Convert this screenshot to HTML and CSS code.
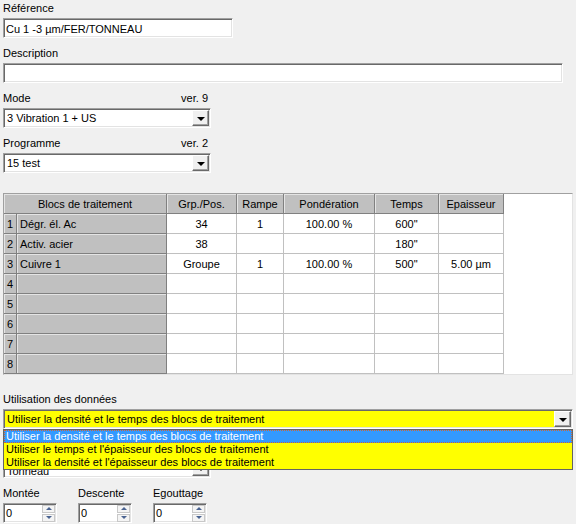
FILE: index.html
```html
<!DOCTYPE html>
<html lang="fr">
<head>
  <meta charset="UTF-8">
  <title>Programme de traitement</title>
  <link rel="stylesheet" href="styles.css">
</head>
<body>

  <div class="form">

    <!-- Référence -->
    <div class="field">
      <div class="label">Référence</div>
      <div class="box w-ref">Cu 1 -3 µm/FER/TONNEAU</div>
    </div>

    <div class="field">
      <div class="label">Description</div>
      <div class="box w-desc"></div>
    </div>

    <div class="field">
      <div class="label label-row"><span>Mode</span><span>ver. 9</span></div>
      <div class="box combo w-combo">
        <span>3 Vibration 1 + US</span>
        <div class="arrow-btn"><span class="tri"></span></div>
      </div>
    </div>

    <div class="field">
      <div class="label label-row"><span>Programme</span><span>ver. 2</span></div>
      <div class="box combo w-combo">
        <span>15 test</span>
        <div class="arrow-btn"><span class="tri"></span></div>
      </div>
    </div>

    <!-- Blocs de traitement -->
    <div class="grid-wrap">
      <table class="grid">
        <colgroup>
          <col style="width:13px"><col style="width:150px"><col style="width:70px"><col style="width:47px">
          <col style="width:91px"><col style="width:64px"><col style="width:65px">
        </colgroup>
        <tr>
          <th colspan="2">Blocs de traitement</th>
          <th>Grp./Pos.</th>
          <th>Rampe</th>
          <th>Pondération</th>
          <th>Temps</th>
          <th>Epaisseur</th>
        </tr>
        <tr>
          <td class="num">1</td><td class="name">Dégr. él. Ac</td>
          <td>34</td><td>1</td><td>100.00 %</td><td>600"</td><td></td>
        </tr>
        <tr>
          <td class="num">2</td><td class="name">Activ. acier</td>
          <td>38</td><td></td><td></td><td>180"</td><td></td>
        </tr>
        <tr>
          <td class="num">3</td><td class="name">Cuivre 1</td>
          <td>Groupe</td><td>1</td><td>100.00 %</td><td>500"</td><td>5.00 µm</td>
        </tr>
        <tr><td class="num">4</td><td class="name"></td><td></td><td></td><td></td><td></td><td></td></tr>
        <tr><td class="num">5</td><td class="name"></td><td></td><td></td><td></td><td></td><td></td></tr>
        <tr><td class="num">6</td><td class="name"></td><td></td><td></td><td></td><td></td><td></td></tr>
        <tr><td class="num">7</td><td class="name"></td><td></td><td></td><td></td><td></td><td></td></tr>
        <tr><td class="num">8</td><td class="name"></td><td></td><td></td><td></td><td></td><td></td></tr>
      </table>
    </div>

    <div class="field field-use">
      <div class="label">Utilisation des données</div>
      <div class="combo-holder">
        <div class="box combo yellow w-full">
          <span>Utiliser la densité et le temps des blocs de traitement</span>
          <div class="arrow-btn"><span class="tri"></span></div>
        </div>
        <!-- liste déroulante ouverte -->
        <div class="droplist">
          <div class="item selected">Utiliser la densité et le temps des blocs de traitement</div>
          <div class="item">Utiliser le temps et l'épaisseur des blocs de traitement</div>
          <div class="item">Utiliser la densité et l'épaisseur des blocs de traitement</div>
        </div>
      </div>
    </div>

    <div class="field field-hidden">
      <div class="label">&nbsp;</div>
      <div class="box combo w-combo">
        <span class="under">Tonneau</span>
        <div class="arrow-btn"><span class="tri"></span></div>
      </div>
    </div>

    <div class="spins">
      <div class="spin-field">
        <div class="label">Montée</div>
        <div class="box spin"><span>0</span>
          <div class="spin-btns"><div class="sb"><span class="up"></span></div><div class="sb"><span class="down"></span></div></div>
        </div>
      </div>
      <div class="spin-field">
        <div class="label">Descente</div>
        <div class="box spin"><span>0</span>
          <div class="spin-btns"><div class="sb"><span class="up"></span></div><div class="sb"><span class="down"></span></div></div>
        </div>
      </div>
      <div class="spin-field">
        <div class="label">Egouttage</div>
        <div class="box spin"><span>0</span>
          <div class="spin-btns"><div class="sb"><span class="up"></span></div><div class="sb"><span class="down"></span></div></div>
        </div>
      </div>
    </div>

  </div>

</body>
</html>
```

FILE: styles.css
```css
body {
  margin: 0;
  background: #f0f0f0;
  font-family: 'Liberation Sans', Arial, sans-serif;
  font-size: 11px;
  color: #000;
  width: 576px;
  height: 524px;
  overflow: hidden;
}

.form {
  padding: 2px 0 0 3px;
}

.field {
  margin-bottom: 9px;
}

.label {
  height: 13px;
  line-height: 13px;
  margin-bottom: 3px;
  white-space: nowrap;
}

.label-row {
  display: flex;
  justify-content: space-between;
  width: 205px;
}

/* champ creux style Windows */
.box {
  box-sizing: border-box;
  height: 20px;
  background: #fff;
  border: 1px solid;
  border-color: #a0a0a0 #ffffff #ffffff #a0a0a0;
  box-shadow: inset 1px 1px 0 #696969, inset -1px -1px 0 #e3e3e3;
  padding: 1px 2px 0 2px;
  display: flex;
  align-items: center;
  white-space: nowrap;
}

.w-ref { width: 230px; }
.w-desc { width: 560px; }
.w-combo { width: 208px; }
.w-full { width: 570px; }

.combo {
  justify-content: space-between;
  padding: 0 1px 0 3px;
}

.yellow {
  background: #ffff00;
}

.arrow-btn {
  box-sizing: border-box;
  width: 17px;
  height: 16px;
  background: #f0f0f0;
  border: 1px solid;
  border-color: #ffffff #696969 #696969 #ffffff;
  box-shadow: inset -1px -1px 0 #a0a0a0;
  display: flex;
  align-items: center;
  justify-content: center;
}

.tri {
  width: 0;
  height: 0;
  border-left: 4px solid transparent;
  border-right: 4px solid transparent;
  border-top: 4px solid #000;
  margin-top: 1px;
}

/* grille */
.grid-wrap {
  box-sizing: border-box;
  width: 570px;
  height: 182px;
  margin-top: 20px;
  background: #fff;
  border: 1px solid;
  border-color: #a0a0a0 #e3e3e3 #e3e3e3 #a0a0a0;
}

.grid {
  table-layout: fixed;
  width: 500px;
  border-collapse: separate;
  border-spacing: 0;
}

.grid th,
.grid td {
  height: 19px;
  padding: 0;
  text-align: center;
  font-weight: normal;
  white-space: nowrap;
  overflow: hidden;
  border-right: 1px solid #c0c0c0;
  border-bottom: 1px solid #c0c0c0;
}

.grid th,
.grid td.num,
.grid td.name {
  background: #c0c0c0;
  border-right-color: #808080;
  border-bottom-color: #808080;
  box-shadow: inset 1px 1px 0 #e4e4e4;
}

.grid td.name {
  text-align: left;
  padding-left: 3px;
}

.field-use {
  margin-top: 18px;
}

.combo-holder {
  position: relative;
}

.droplist {
  position: absolute;
  top: 20px;
  left: 0;
  width: 570px;
  box-sizing: border-box;
  border: 1px solid #646464;
  background: #ffff00;
  z-index: 2;
}

.item {
  height: 13px;
  line-height: 13px;
  padding-left: 2px;
  white-space: nowrap;
}

.item.selected {
  background: #3399ff;
  color: #fff;
  outline: 1px dotted #cc6633;
  outline-offset: -1px;
}

.field-hidden {
  margin-top: 13px;
}

/* texte en partie caché par la liste ouverte */
.under {
  align-self: flex-end;
  line-height: 12px;
}

/* montée / descente / égouttage */
.spins {
  display: flex;
  gap: 21px;
}

.spin {
  width: 54px;
  padding: 0 1px 0 2px;
  justify-content: space-between;
}

.spin-btns {
  display: flex;
  flex-direction: column;
  gap: 1px;
}

.sb {
  box-sizing: border-box;
  width: 13px;
  height: 8px;
  background: #f4f4f4;
  border: 1px solid #c8c8c8;
  display: flex;
  align-items: center;
  justify-content: center;
}

.up {
  border-left: 3px solid transparent;
  border-right: 3px solid transparent;
  border-bottom: 3px solid #4a6390;
}

.down {
  border-left: 3px solid transparent;
  border-right: 3px solid transparent;
  border-top: 3px solid #4a6390;
}
```
